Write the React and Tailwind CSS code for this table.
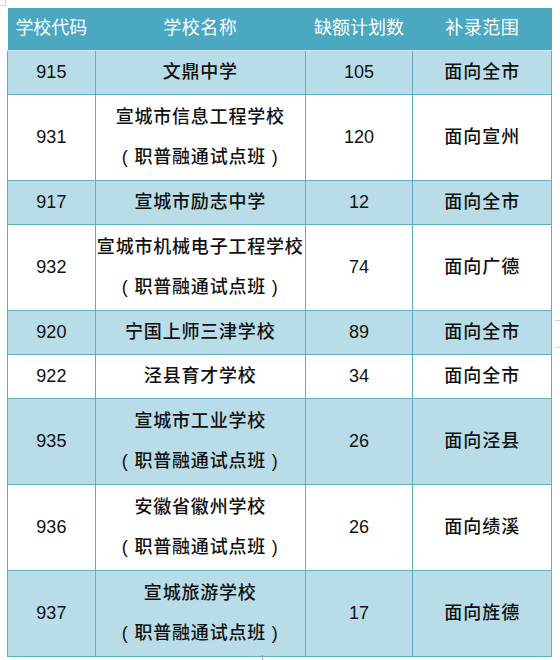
import React from 'react';

const rows = [
  { code: '915', name: ['文鼎中学'], count: '105', scope: '面向全市' },
  { code: '931', name: ['宣城市信息工程学校', '( 职普融通试点班 )'], count: '120', scope: '面向宣州' },
  { code: '917', name: ['宣城市励志中学'], count: '12', scope: '面向全市' },
  { code: '932', name: ['宣城市机械电子工程学校', '( 职普融通试点班 )'], count: '74', scope: '面向广德' },
  { code: '920', name: ['宁国上师三津学校'], count: '89', scope: '面向全市' },
  { code: '922', name: ['泾县育才学校'], count: '34', scope: '面向全市' },
  { code: '935', name: ['宣城市工业学校', '( 职普融通试点班 )'], count: '26', scope: '面向泾县' },
  { code: '936', name: ['安徽省徽州学校', '( 职普融通试点班 )'], count: '26', scope: '面向绩溪' },
  { code: '937', name: ['宣城旅游学校', '( 职普融通试点班 )'], count: '17', scope: '面向旌德' },
];

const font = { fontFamily: '"Liberation Sans", "Noto Sans CJK SC", sans-serif' };

export default function App() {
  return (
    <div className="w-[560px] h-[660px] bg-white relative" style={font}>
      <div className="absolute left-0 top-0 w-[6px] h-[6px] border-r border-b border-gray-300" />
      <div className="pt-[8px] pl-[7px]">
        <table className="border-collapse w-[545px] text-[18px] text-[#111] text-center font-medium">
          <colgroup>
            <col className="w-[88px]" />
            <col className="w-[210px]" />
            <col className="w-[108px]" />
            <col className="w-[139px]" />
          </colgroup>
          <thead>
            <tr className="h-[42px] bg-[#4aa8c1] text-white">
              <th className="font-normal border-b border-[#cfe8ef]">学校代码</th>
              <th className="font-normal border-b border-[#cfe8ef] tracking-[0.5px]">学校名称</th>
              <th className="font-normal border-b border-[#cfe8ef]">缺额计划数</th>
              <th className="font-normal border-b border-[#cfe8ef] tracking-[0.5px]">补录范围</th>
            </tr>
          </thead>
          <tbody>
            {rows.map((r, i) => {
              const bg = i % 2 === 0 ? 'bg-[#b8dde8]' : 'bg-white';
              const h = r.name.length > 1 ? 'h-[86px]' : 'h-[44px]';
              return (
                <tr key={r.code} className={`${bg} ${h}`}>
                  <td className="border border-[#62aebf] p-0 font-normal">{r.code}</td>
                  <td className="border border-[#62aebf] p-0 tracking-[0.8px]">
                    {r.name.map((n) => (
                      <div key={n} className="leading-[40px] whitespace-pre">{n}</div>
                    ))}
                  </td>
                  <td className="border border-[#62aebf] p-0 font-normal">{r.count}</td>
                  <td className="border border-[#62aebf] p-0 tracking-[1px]">{r.scope}</td>
                </tr>
              );
            })}
          </tbody>
        </table>
      </div>
      <div className="absolute left-[555px] top-[320px] w-[5px] h-[28px] border-t border-b border-gray-300" />
      <div className="absolute left-[262px] top-[655px] w-[1px] h-[5px] bg-gray-400" />
    </div>
  );
}
